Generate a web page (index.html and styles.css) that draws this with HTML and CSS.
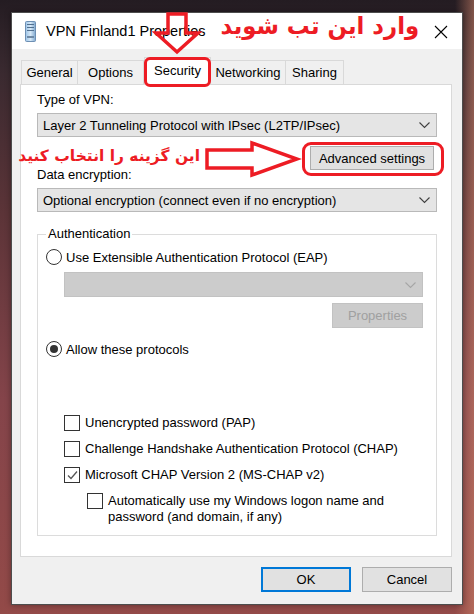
FILE: index.html
```html
<!DOCTYPE html>
<html>
<head>
<meta charset="utf-8">
<link rel="stylesheet" href="styles.css">
</head>
<body>
<div class="window">
  <div class="titlebar">
    <svg class="app-icon" width="11" height="21" viewBox="0 0 11 21">
      <defs>
        <linearGradient id="ig" x1="0" x2="1" y1="0" y2="0">
          <stop offset="0" stop-color="#9cc3e6"/>
          <stop offset="0.5" stop-color="#d6e8f7"/>
          <stop offset="1" stop-color="#7fa8cf"/>
        </linearGradient>
      </defs>
      <rect x="0.5" y="0.5" width="10" height="20" rx="1" fill="url(#ig)" stroke="#6d8fb3"/>
      <rect x="2" y="3" width="7" height="1" fill="#52708f"/>
      <rect x="2" y="6" width="7" height="1" fill="#52708f"/>
      <rect x="2" y="9" width="7" height="1" fill="#52708f"/>
      <rect x="2" y="15" width="7" height="2" fill="#6f8aa6"/>
    </svg>
    <span class="title">VPN Finland1 Properties</span>
    <svg class="close" width="14" height="14" viewBox="0 0 14 14">
      <path d="M1 1 L13 13 M13 1 L1 13" stroke="#000" stroke-width="1.1" fill="none"/>
    </svg>
  </div>

  <div class="tabs">
    <div class="tab t-general">General</div>
    <div class="tab t-options">Options</div>
    <div class="tab t-security active">Security</div>
    <div class="tab t-networking">Networking</div>
    <div class="tab t-sharing">Sharing</div>
  </div>

  <div class="panel">
    <div class="label l-type">Type of VPN:</div>
    <div class="combo">
      <span>Layer 2 Tunneling Protocol with IPsec (L2TP/IPsec)</span>
      <svg class="chev" width="11" height="7" viewBox="0 0 11 7"><path d="M0.5 0.5 L5.5 5.5 L10.5 0.5" stroke="#404040" stroke-width="1.1" fill="none"/></svg>
    </div>
    <div class="adv-row"><div class="btn adv">Advanced settings</div></div>
    <div class="label l-enc">Data encryption:</div>
    <div class="combo combo-enc">
      <span>Optional encryption (connect even if no encryption)</span>
      <svg class="chev" width="11" height="7" viewBox="0 0 11 7"><path d="M0.5 0.5 L5.5 5.5 L10.5 0.5" stroke="#404040" stroke-width="1.1" fill="none"/></svg>
    </div>

    <fieldset class="group">
      <legend>Authentication</legend>
      <div class="radio-row r-eap"><span class="radio"></span><span>Use Extensible Authentication Protocol (EAP)</span></div>
      <div class="combo disabled">
        <span></span>
        <svg class="chev" width="11" height="7" viewBox="0 0 11 7"><path d="M0.5 0.5 L5.5 5.5 L10.5 0.5" stroke="#a6a6a6" stroke-width="1.1" fill="none"/></svg>
      </div>
      <div class="prop-row"><div class="btn btn-disabled props">Properties</div></div>
      <div class="radio-row r-allow"><span class="radio checked"></span><span>Allow these protocols</span></div>

      <div class="checks">
        <div class="check-row"><span class="box"></span><span>Unencrypted password (PAP)</span></div>
        <div class="check-row"><span class="box"></span><span>Challenge Handshake Authentication Protocol (CHAP)</span></div>
        <div class="check-row"><span class="box">
          <svg width="13" height="13" viewBox="0 0 13 13"><path d="M2 6.5 L5 9.5 L11 2.5" stroke="#555" stroke-width="1.3" fill="none"/></svg>
        </span><span>Microsoft CHAP Version 2 (MS-CHAP v2)</span></div>
        <div class="check-row nested"><span class="box"></span><span class="wrap">Automatically use my Windows logon name and<br>password (and domain, if any)</span></div>
      </div>
    </fieldset>
  </div>

  <div class="footer">
    <div class="btn ok">OK</div>
    <div class="btn cancel">Cancel</div>
  </div>
</div>

<svg class="ann ann-down" width="50" height="46" viewBox="0 0 50 46">
  <polygon points="16,3 34,3 34,22 46,22 25,41 4,22 16,22" fill="none" stroke="#ed1c24" stroke-width="3.5" stroke-linejoin="miter"/>
</svg>
<div class="ann ann-rect sec-rect"></div>
<div class="ann ann-rect adv-rect"></div>
<svg class="ann ann-right" width="100" height="38" viewBox="0 0 100 38">
  <polygon points="5,10 50,10 50,3 95,19 50,35 50,28 5,28" fill="none" stroke="#ed1c24" stroke-width="3.5"/>
</svg>
<div class="ann ann-text ann-title">وارد این تب شوید</div>
<div class="ann ann-text ann-choose">این گزینه را انتخاب کنید</div>
</body>
</html>
```

FILE: styles.css
```css
* { box-sizing: border-box; }

html, body {
  margin: 0;
  height: 614px;
  overflow: hidden;
}

body {
  position: relative;
  padding: 12px 0 0 11px;
  font-family: "Liberation Sans", Arial, sans-serif;
  font-size: 13px;
  color: #000;
  background:
    linear-gradient(90deg, rgba(0,0,0,0) 96%, rgba(205,130,105,0.55) 100%),
    linear-gradient(180deg, #241c22 0%, #3a2a30 12%, #5c3438 35%, #84444a 65%, #934a48 100%);
}

.window {
  width: 452px;
  height: 593px;
  border: 1px solid #4d4d4d;
  background: #f0f0f0;
  display: flex;
  flex-direction: column;
  box-shadow: 0 0 6px rgba(0,0,0,0.35);
}

/* title bar */
.titlebar {
  height: 36px;
  background: #fff;
  display: flex;
  align-items: center;
  padding-left: 13px;
  flex: none;
}
.app-icon { flex: none; margin-top: 1px; }
.title {
  margin-left: 10px;
  font-size: 14.5px;
  color: #000;
  flex: 1;
}
.close { flex: none; margin-right: 14px; margin-top: 1px; }

/* tabs */
.tabs {
  display: flex;
  align-items: flex-end;
  height: 35px;
  padding-left: 9px;
  flex: none;
  position: relative;
}
.tab {
  height: 24px;
  border: 1px solid #d9d9d9;
  border-bottom: none;
  background: #f0f0f0;
  display: flex;
  align-items: center;
  justify-content: center;
  font-size: 13px;
}
.t-general { width: 57px; }
.t-options { width: 66px; border-left: none; }
.t-security { width: 67px; }
.t-networking { width: 75px; border-left: none; }
.t-sharing { width: 58px; border-left: none; }
.tab.active {
  height: 28px;
  background: #fff;
  margin-bottom: -1px;
  padding-bottom: 3px;
}

/* panel */
.panel {
  margin-left: 8px;
  width: 432px;
  height: 473px;
  background: #fff;
  border: 1px solid #d9d9d9;
  padding: 0 14px 0 16px;
  display: flex;
  flex-direction: column;
  flex: none;
}

.label { height: 16px; line-height: 16px; }
.l-type { margin-top: 7px; }
.l-enc { margin-top: -3px; }

.combo {
  height: 24px;
  margin-top: 5px;
  background: #e5e5e5;
  border: 1px solid #b9b9b9;
  display: flex;
  align-items: center;
  justify-content: space-between;
  padding: 0 6px 0 5px;
  flex: none;
}
.chev { flex: none; margin-top: 1px; }

.adv-row {
  display: flex;
  justify-content: flex-end;
  margin-top: 9px;
  padding-right: 3px;
}

.btn {
  height: 24px;
  background: #e1e1e1;
  border: 1px solid #adadad;
  display: flex;
  align-items: center;
  justify-content: center;
  font-size: 13px;
}
.adv { width: 124px; }

/* group box */
.group {
  margin: 14px 0 0 0;
  padding: 0 13px 0 8px;
  border: 1px solid #dcdcdc;
  height: 310px;
  min-width: 0;
  display: block;
}
.group legend {
  padding: 0 2px;
  height: 16px;
  line-height: 16px;
}

.radio-row {
  display: flex;
  align-items: center;
  height: 16px;
  gap: 4px;
}
.r-eap { margin-top: 7px; }
.r-allow { margin-top: 13px; }
.radio {
  width: 16px;
  height: 16px;
  border: 1px solid #333;
  border-radius: 50%;
  background: #fff;
  display: flex;
  align-items: center;
  justify-content: center;
  flex: none;
}
.radio.checked::after {
  content: "";
  width: 8px;
  height: 8px;
  border-radius: 50%;
  background: #333;
}

.group .combo.disabled {
  margin: 7px 0 0 18px;
  height: 25px;
  background: #cccccc;
  border-color: #c2c2c2;
}

.prop-row {
  display: flex;
  justify-content: flex-end;
  margin-top: 6px;
}
.btn-disabled {
  background: #cccccc;
  border-color: #c2c2c2;
  color: #a0a0a0;
}
.props { width: 91px; height: 25px; }

.checks {
  margin: 58px 0 0 18px;
  display: flex;
  flex-direction: column;
  gap: 10px;
}
.check-row {
  display: flex;
  align-items: flex-start;
  gap: 5px;
  line-height: 16px;
}
.box {
  width: 16px;
  height: 16px;
  border: 1px solid #333;
  background: #fff;
  flex: none;
  display: flex;
  align-items: center;
  justify-content: center;
}
.check-row.nested { margin-left: 23px; }
.wrap { line-height: 16px; }

/* footer */
.footer {
  display: flex;
  justify-content: flex-end;
  gap: 11px;
  margin-top: 10px;
  padding-right: 10px;
}
.ok, .cancel { width: 90px; height: 25px; }
.ok { border: 2px solid #0078d7; }

/* annotations (overlaid on the screenshot) */
.ann { position: absolute; z-index: 10; }
.ann-down { left: 152px; top: 11px; }
.ann-right { left: 202px; top: 140px; }
.ann-rect { border: 3px solid #ed1c24; }
.sec-rect { left: 144px; top: 57px; width: 67px; height: 30px; border-radius: 6px; }
.adv-rect { left: 302px; top: 142px; width: 142px; height: 34px; border-radius: 9px; }

.ann-text {
  direction: rtl;
  font-family: "DejaVu Sans", sans-serif;
  font-weight: bold;
  color: #ed1c24;
  white-space: nowrap;
}
.ann-title { right: 55px; top: 12px; font-size: 24px; transform: scaleX(0.95); transform-origin: right center; }
.ann-choose { right: 274px; top: 147px; font-size: 15.5px; }
```
